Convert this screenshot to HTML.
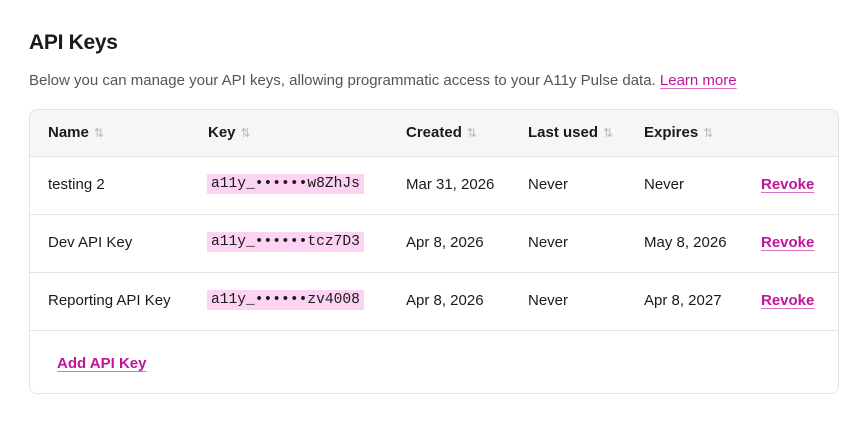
<!DOCTYPE html>
<html><head><style>
body{margin:0;background:#fff;font-family:"Liberation Sans",sans-serif;color:#1a1a1a;width:866px;height:434px;overflow:hidden;position:relative}
h1{position:absolute;left:29px;top:31px;margin:0;font-size:21px;font-weight:700;letter-spacing:-0.3px}
.desc{position:absolute;left:29px;top:72px;font-size:15px;color:#555}
a{color:#c0139c;text-decoration:underline;text-underline-offset:3px;text-decoration-color:#d870c4}
.card{position:absolute;left:29px;top:109px;width:810px;height:285px;border:1px solid #e3e3e3;border-radius:8px;overflow:hidden;box-sizing:border-box}
.hd{position:absolute;left:0;top:0;width:100%;height:46px;background:#f6f6f6;border-bottom:1px solid #e3e3e3}
.row{position:absolute;left:0;width:100%;height:58px;border-bottom:1px solid #e3e3e3}
.c{position:absolute;font-size:15px;white-space:nowrap}
.hd .c{top:14px;font-weight:700;font-size:15px}
.row .c{top:20px}
.s{color:#bbb;font-weight:400;font-size:12px;margin-left:5px}
.k{font-family:"Liberation Mono",monospace;background:#fcd3f2;padding:2px 4px;font-size:14.6px;margin-left:-1px}
.rv{font-weight:700;color:#c0139c}
</style></head><body>
<h1>API Keys</h1>
<div class="desc">Below you can manage your API keys, allowing programmatic access to your A11y Pulse data. <a href="#">Learn more</a></div>
<div class="card">
<div class="hd">
<span class="c" style="left:18px">Name<span class="s">⇅</span></span>
<span class="c" style="left:178px">Key<span class="s">⇅</span></span>
<span class="c" style="left:376px">Created<span class="s">⇅</span></span>
<span class="c" style="left:498px">Last used<span class="s">⇅</span></span>
<span class="c" style="left:614px">Expires<span class="s">⇅</span></span>
</div>
<div class="row" style="top:46px">
<span class="c" style="left:18px">testing 2</span>
<span class="c" style="left:178px;top:18px"><span class="k">a11y_••••••w8ZhJs</span></span>
<span class="c" style="left:376px">Mar 31, 2026</span>
<span class="c" style="left:498px">Never</span>
<span class="c" style="left:614px">Never</span>
<span class="c rv" style="left:731px"><a href="#">Revoke</a></span>
</div>
<div class="row" style="top:104px">
<span class="c" style="left:18px">Dev API Key</span>
<span class="c" style="left:178px;top:18px"><span class="k">a11y_••••••tcz7D3</span></span>
<span class="c" style="left:376px">Apr 8, 2026</span>
<span class="c" style="left:498px">Never</span>
<span class="c" style="left:614px">May 8, 2026</span>
<span class="c rv" style="left:731px"><a href="#">Revoke</a></span>
</div>
<div class="row" style="top:162px">
<span class="c" style="left:18px">Reporting API Key</span>
<span class="c" style="left:178px;top:18px"><span class="k">a11y_••••••zv4008</span></span>
<span class="c" style="left:376px">Apr 8, 2026</span>
<span class="c" style="left:498px">Never</span>
<span class="c" style="left:614px">Apr 8, 2027</span>
<span class="c rv" style="left:731px"><a href="#">Revoke</a></span>
</div>
<span class="c rv" style="left:27px;top:245px"><a href="#">Add API Key</a></span>
</div>
</body></html>
